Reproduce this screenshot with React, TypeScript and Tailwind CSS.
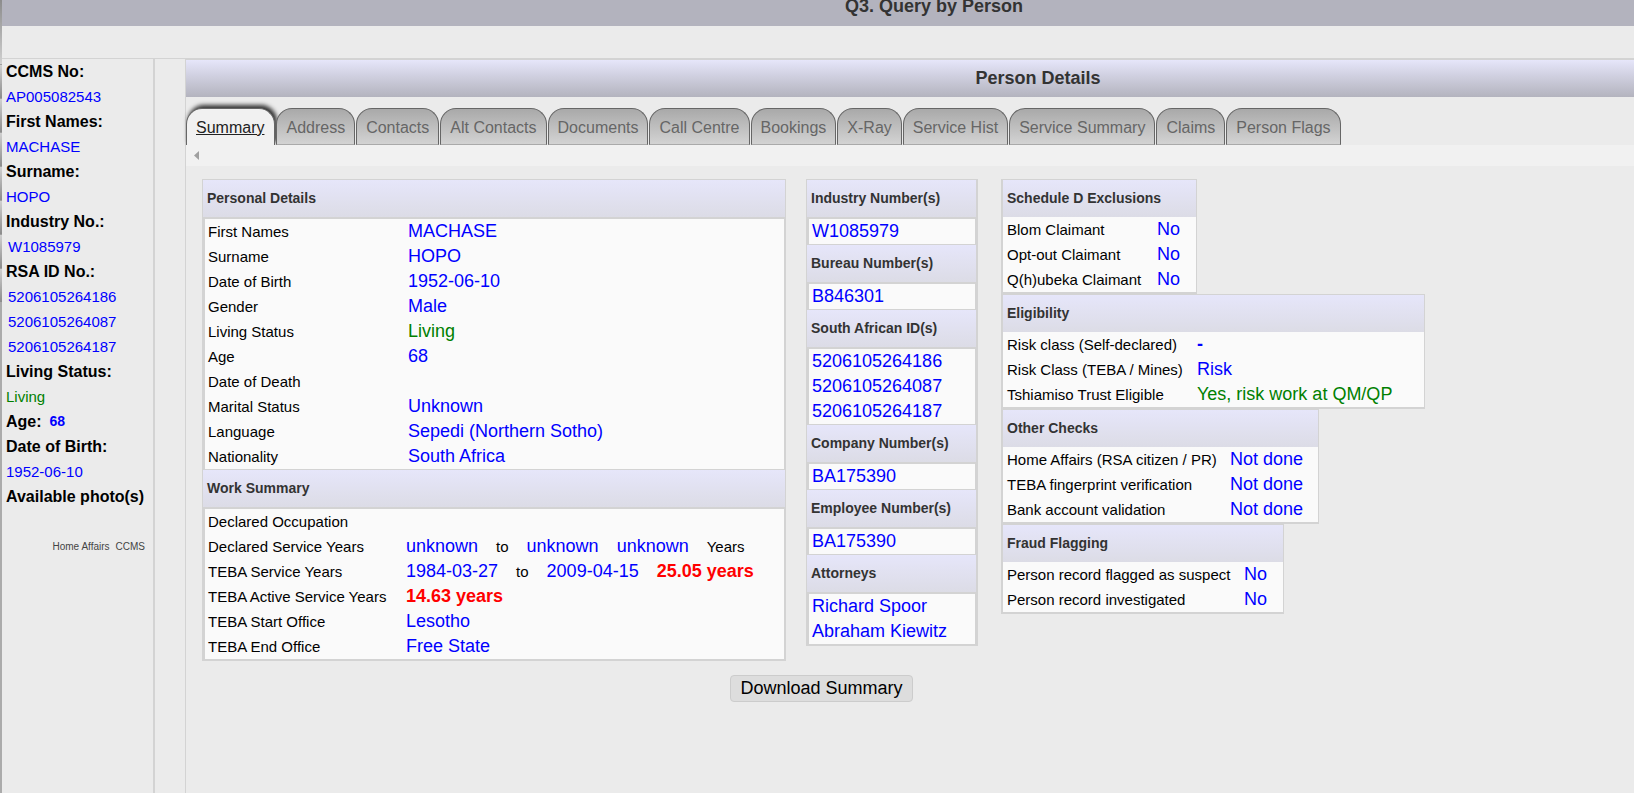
import React from "react";

type Tone = "blue" | "green";
type Row = { label: string; value: string; tone?: Tone; bold?: boolean };

const tabs = [
  "Address", "Contacts", "Alt Contacts", "Documents", "Call Centre", "Bookings",
  "X-Ray", "Service Hist", "Service Summary", "Claims", "Person Flags",
];

const personal: Row[] = [
  { label: "First Names", value: "MACHASE" },
  { label: "Surname", value: "HOPO" },
  { label: "Date of Birth", value: "1952-06-10" },
  { label: "Gender", value: "Male" },
  { label: "Living Status", value: "Living", tone: "green" },
  { label: "Age", value: "68" },
  { label: "Date of Death", value: "" },
  { label: "Marital Status", value: "Unknown" },
  { label: "Language", value: "Sepedi (Northern Sotho)" },
  { label: "Nationality", value: "South Africa" },
];

const blue = "text-[#0000ff]";
const small = "text-[15px]";

const numbers = [
  { title: "Industry Number(s)", values: ["W1085979"] },
  { title: "Bureau Number(s)", values: ["B846301"] },
  { title: "South African ID(s)", values: ["5206105264186", "5206105264087", "5206105264187"] },
  { title: "Company Number(s)", values: ["BA175390"] },
  { title: "Employee Number(s)", values: ["BA175390"] },
  { title: "Attorneys", values: ["Richard Spoor", "Abraham Kiewitz"] },
];

const checks: { title: string; width: string; labelWidth: string; rows: Row[] }[] = [
  {
    title: "Schedule D Exclusions",
    width: "w-[196px]",
    labelWidth: "w-[150px]",
    rows: [
      { label: "Blom Claimant", value: "No" },
      { label: "Opt-out Claimant", value: "No" },
      { label: "Q(h)ubeka Claimant", value: "No" },
    ],
  },
  {
    title: "Eligibility",
    width: "w-[424px]",
    labelWidth: "w-[190px]",
    rows: [
      { label: "Risk class (Self-declared)", value: "-", bold: true },
      { label: "Risk Class (TEBA / Mines)", value: "Risk" },
      { label: "Tshiamiso Trust Eligible", value: "Yes, risk work at QM/QP", tone: "green" },
    ],
  },
  {
    title: "Other Checks",
    width: "w-[318px]",
    labelWidth: "w-[223px]",
    rows: [
      { label: "Home Affairs (RSA citizen / PR)", value: "Not done" },
      { label: "TEBA fingerprint verification", value: "Not done" },
      { label: "Bank account validation", value: "Not done" },
    ],
  },
  {
    title: "Fraud Flagging",
    width: "w-[283px]",
    labelWidth: "w-[237px]",
    rows: [
      { label: "Person record flagged as suspect", value: "No" },
      { label: "Person record investigated", value: "No" },
    ],
  },
];

function Heading({ children }: { children: React.ReactNode }) {
  return (
    <h2 className="h-[37px] bg-linear-to-b from-[#e6e6fa] to-[#dcdce6] pl-1 text-sm leading-[37px] font-bold text-[#333]">
      {children}
    </h2>
  );
}

function Rows({ rows, labelWidth }: { rows: Row[]; labelWidth: string }) {
  return (
    <table className="w-full table-fixed border-collapse leading-[25px]">
      <tbody>
        {rows.map((r) => (
          <tr key={r.label} className="h-[25px]">
            <th scope="row" className={`${labelWidth} p-0 text-left font-normal ${small} whitespace-nowrap`}>
              {r.label}
            </th>
            <td className={`p-0 whitespace-nowrap ${r.tone === "green" ? "text-[#008000]" : blue} ${r.bold ? "font-bold" : ""}`}>
              {r.value}
            </td>
          </tr>
        ))}
      </tbody>
    </table>
  );
}

function SideItem({ label, children }: { label: string; children?: React.ReactNode }) {
  return (
    <>
      <dt className="text-base leading-[25px] font-bold">{label}</dt>
      {children}
    </>
  );
}

function WorkSummary() {
  const cell = "p-0";
  const label = `w-[198px] p-0 text-left font-normal ${small} whitespace-nowrap`;
  const parts = "flex gap-[18px] whitespace-nowrap";
  return (
    <table className="w-full table-fixed border-collapse leading-[25px]">
      <tbody>
        <tr className="h-[25px]">
          <th scope="row" className={label}>Declared Occupation</th>
          <td className={cell} />
        </tr>
        <tr className="h-[25px]">
          <th scope="row" className={label}>Declared Service Years</th>
          <td className={cell}>
            <div className={parts}>
              <span className={blue}>unknown</span>
              <span className={small}>to</span>
              <span className={blue}>unknown</span>
              <span className={blue}>unknown</span>
              <span className={small}>Years</span>
            </div>
          </td>
        </tr>
        <tr className="h-[25px]">
          <th scope="row" className={label}>TEBA Service Years</th>
          <td className={cell}>
            <div className={parts}>
              <span className={blue}>1984-03-27</span>
              <span className={small}>to</span>
              <span className={blue}>2009-04-15</span>
              <span className="font-bold text-[#ff0000]">25.05 years</span>
            </div>
          </td>
        </tr>
        <tr className="h-[25px]">
          <th scope="row" className={label}>TEBA Active Service Years</th>
          <td className={`${cell} font-bold text-[#ff0000]`}>14.63 years</td>
        </tr>
        <tr className="h-[25px]">
          <th scope="row" className={label}>TEBA Start Office</th>
          <td className={`${cell} ${blue}`}>Lesotho</td>
        </tr>
        <tr className="h-[25px]">
          <th scope="row" className={label}>TEBA End Office</th>
          <td className={`${cell} ${blue}`}>Free State</td>
        </tr>
      </tbody>
    </table>
  );
}

function EdgeStrip() {
  return (
    <div className="w-[2px] shrink-0 bg-[#ababab]" aria-hidden="true">
      <div className="h-16 bg-linear-to-b from-[#8c8c8c] to-[#d0d0d0]" />
      {[0, 1, 2, 3, 4, 5, 6].map((i) => (
        <div key={i} className="h-[34px] border-t border-[#a0a0a0] bg-linear-to-b from-[#d0d0d0] to-[#8c8c8c]" />
      ))}
    </div>
  );
}

export default function App() {
  return (
    <div className="flex min-h-screen overflow-hidden bg-[#ebebeb] font-['Liberation_Sans',Arial,sans-serif] text-lg text-black">
      <EdgeStrip />
      <div className="flex min-w-0 flex-1 flex-col">
        <header className="h-[26px] bg-[#b3b3be] pl-58 text-center">
          <h1 className="text-lg leading-3 font-bold text-[#333]">Q3. Query by Person</h1>
        </header>
        <div className="h-8" />
        <div className="flex flex-1 border-t border-[#d3d3d3]">
          <aside className="w-[153px] shrink-0 border-r-2 border-[#d3d3d3] pl-1 leading-[25px]">
            <dl className={`text-[15px] leading-[25px] ${blue} [&_dt]:text-black`}>
              <SideItem label="CCMS No:"><dd>AP005082543</dd></SideItem>
              <SideItem label="First Names:"><dd>MACHASE</dd></SideItem>
              <SideItem label="Surname:"><dd>HOPO</dd></SideItem>
              <SideItem label="Industry No.:"><dd className="pl-[2px]">W1085979</dd></SideItem>
              <SideItem label="RSA ID No.:">
                <dd className="pl-[2px]">5206105264186</dd>
                <dd className="pl-[2px]">5206105264087</dd>
                <dd className="pl-[2px]">5206105264187</dd>
              </SideItem>
              <SideItem label="Living Status:"><dd className="text-[#008000]">Living</dd></SideItem>
              <div className="flex gap-2">
                <dt className="text-base leading-[25px] font-bold">Age:</dt>
                <dd className="text-sm leading-[25px] font-bold">68</dd>
              </div>
              <SideItem label="Date of Birth:"><dd>1952-06-10</dd></SideItem>
              <SideItem label="Available photo(s)" />
            </dl>
            <div className="mt-[25px] flex justify-end gap-1.5 pr-2 text-[10px] leading-[25px] text-[#444]">
              <span>Home Affairs</span>
              <span>CCMS</span>
            </div>
          </aside>
          <main className="ml-[30px] min-w-0 flex-1 border-l border-[#d3d3d3]">
            <div className="border-t border-[#d3d3d3] bg-linear-to-b from-[#e6e6fa] to-[#b3b3be] pl-64 text-center">
              <h2 className="text-lg leading-[37px] font-bold text-[#333]">Person Details</h2>
            </div>
            <nav className="mt-[11px] flex gap-px text-base leading-[33px] whitespace-nowrap">
              <a href="#summary" className="rounded-t-2xl border border-b-0 border-[#666] bg-[#f1f1f1] px-[9px] pt-[2px] pr-[10px] text-[#222] underline shadow-[2px_-3px_4px_#333]">
                Summary
              </a>
              {tabs.map((t) => (
                <a key={t} href="#tab" className="rounded-t-2xl border border-[#666] border-b-[#aaa] bg-linear-to-b from-[#a9a9a9] to-[#d3d3d3] px-[9px] pt-[2px] text-[#666]">
                  {t}
                </a>
              ))}
            </nav>
            <div className="relative flex h-[21px] items-center bg-[#f1f1f1] pl-2">
              <svg width="5" height="9" viewBox="0 0 5 9" fill="#a0a0a0" aria-hidden="true">
                <path d="M5 0v9L0 4.5z" />
              </svg>
            </div>
            <div className="inline-flex flex-col items-center pt-[13px] pl-4">
              <div className="flex items-start pr-4">
                <section className="w-[584px] border border-b-2 border-[#d3d3d3]">
                  <Heading>Personal Details</Heading>
                  <div className="border-y border-t-2 border-r border-l-2 border-[#d3d3d3] bg-[#fafafa] pl-[3px]">
                    <Rows rows={personal} labelWidth="w-[200px]" />
                  </div>
                  <Heading>Work Summary</Heading>
                  <div className="border-t-2 border-r border-l-2 border-[#d3d3d3] bg-[#fafafa] pl-[3px]">
                    <WorkSummary />
                  </div>
                </section>
                <section className="ml-5 w-[172px] border border-r-2 border-[#d3d3d3]">
                  {numbers.map((n) => (
                    <React.Fragment key={n.title}>
                      <Heading>{n.title}</Heading>
                      <ul className={`border-t-2 border-r border-b border-l-2 border-[#d3d3d3] bg-[#fafafa] pl-[3px] leading-[25px] ${blue}`}>
                        {n.values.map((v) => <li key={v}>{v}</li>)}
                      </ul>
                    </React.Fragment>
                  ))}
                </section>
                <div className="ml-[23px]">
                  {checks.map((c) => (
                    <section key={c.title} className={`${c.width} border border-b-2 border-l-2 border-[#d3d3d3] bg-[#fafafa]`}>
                      <Heading>{c.title}</Heading>
                      <div className="pl-1">
                        <Rows rows={c.rows} labelWidth={c.labelWidth} />
                      </div>
                    </section>
                  ))}
                </div>
              </div>
              <button type="button" className="mt-[14px] h-[27px] w-[183px] rounded border border-[#ccc] bg-[#ddd] text-lg leading-[25px]">
                Download Summary
              </button>
            </div>
          </main>
        </div>
      </div>
    </div>
  );
}
